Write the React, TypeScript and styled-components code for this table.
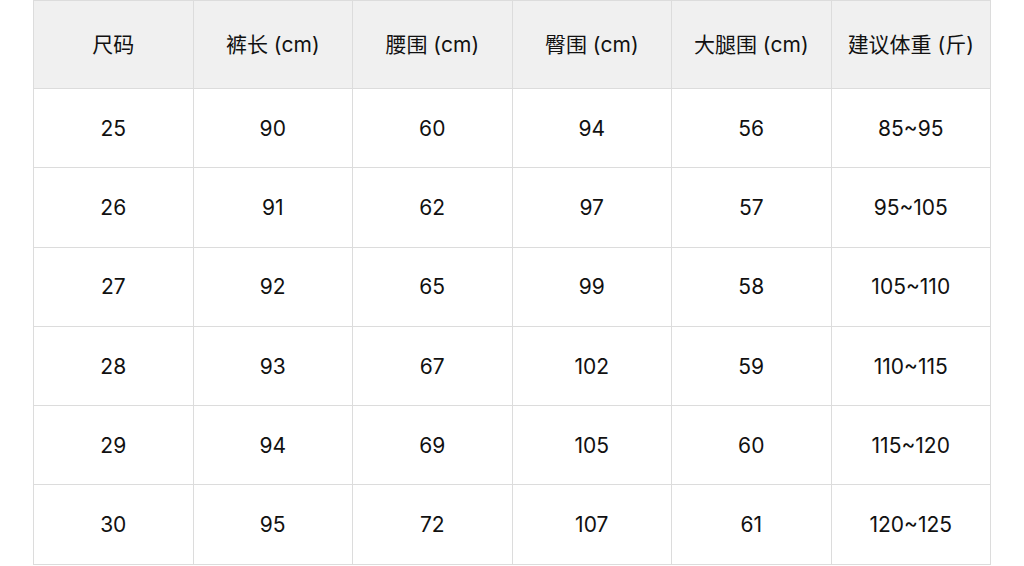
import styled, { createGlobalStyle } from "styled-components";

const GlobalStyle = createGlobalStyle`
  body {
    margin: 0;
    background: #fff;
    font-family: Inter, "Noto Sans CJK SC", sans-serif;
  }
`;

const Page = styled.div`
  padding-left: 33px;
`;

const SizeTable = styled.table`
  width: 958px;
  border-collapse: collapse;
  table-layout: fixed;
  color: #111;
  font-size: 21px;
`;

const HeadCell = styled.th`
  height: 84px;
  background: #f0f0f0;
  border: 1px solid #dcdcdc;
  font-weight: 400;
  text-align: center;
  padding: 0 0 3px;
`;

const Cell = styled.td`
  height: 78.3px;
  border: 1px solid #dcdcdc;
  text-align: center;
  padding: 0;
`;

const headers = ["尺码", "裤长 (cm)", "腰围 (cm)", "臀围 (cm)", "大腿围 (cm)", "建议体重 (斤)"];

const rows = [
  ["25", "90", "60", "94", "56", "85~95"],
  ["26", "91", "62", "97", "57", "95~105"],
  ["27", "92", "65", "99", "58", "105~110"],
  ["28", "93", "67", "102", "59", "110~115"],
  ["29", "94", "69", "105", "60", "115~120"],
  ["30", "95", "72", "107", "61", "120~125"],
];

export default function App() {
  return (
    <Page>
      <GlobalStyle />
      <SizeTable>
        <thead>
          <tr>
            {headers.map((h) => (
              <HeadCell key={h}>{h}</HeadCell>
            ))}
          </tr>
        </thead>
        <tbody>
          {rows.map((row) => (
            <tr key={row[0]}>
              {row.map((v, i) => (
                <Cell key={i}>{v}</Cell>
              ))}
            </tr>
          ))}
        </tbody>
      </SizeTable>
    </Page>
  );
}
